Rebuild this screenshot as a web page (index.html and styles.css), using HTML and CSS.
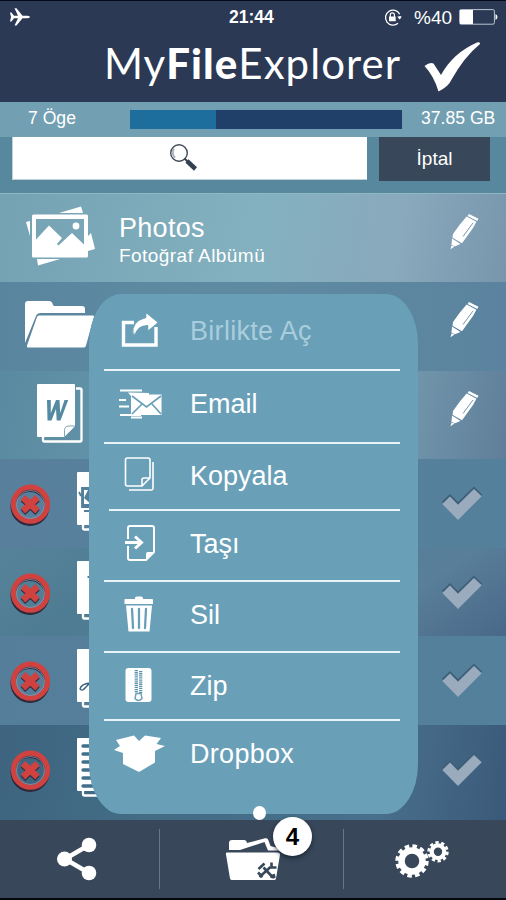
FILE: index.html
```html
<!DOCTYPE html>
<html lang="tr">
<head>
<meta charset="utf-8">
<title>MyFileExplorer</title>
<link rel="stylesheet" href="styles.css">
</head>
<body>
<svg class="defs" width="0" height="0">
  <symbol id="pencil" viewBox="0 0 30 36">
    <path d="M19 0 28.500 4.800 27.200 7 17.600 2Z"/>
    <path d="M16.600 2.600 26.400 7.800 23 14 12 29.200 2.500 23.700 3 20 9.500 11Z"/>
    <path d="M2 24.600 10.500 30 5 32.200 1.500 30.900Z"/>
    <path d="M1.500 31.500 4.500 32.600.5 35.300Z"/>
    <path d="M23 9 13 22.500" fill="none" stroke="#7895ab" stroke-width="1"/>
  </symbol>
  <symbol id="remove" viewBox="0 0 40 42">
    <circle cx="20" cy="22.500" r="17" fill="none" stroke="#2d293c" stroke-width="5"/>
    <circle cx="20.500" cy="20.200" r="17" fill="none" stroke="#cf4240" stroke-width="5.200"/>
    <circle cx="20.500" cy="20.500" r="14" fill="none" stroke="#8c99ac" stroke-width=".8"/>
    <path d="M13 15 27.500 28.500M27.500 15 13 28.500" stroke="#302b3e" stroke-width="6.500"/>
    <path d="M13 13.500 27.500 27M27.500 13.500 13 27" stroke="#cf4240" stroke-width="6.500"/>
  </symbol>
  <symbol id="check" viewBox="0 0 42 36">
    <path d="M1.500 16.500 9 9.500l8 8L33 2l7.500 7.500" fill="none" stroke="#3f5f79" stroke-width="2"/>
    <path d="M1.300 18 9 10.500l8 8.200L33 3l7.700 7.200L17 34Z" fill="#9aabbd"/>
  </symbol>
  <symbol id="page" viewBox="0 0 48 60">
    <path d="M7 54v3q0 1.500 1.500 1.500h35.500q1.500 0 1.500-1.500V7q0-1.500-1.500-1.500h-4" fill="none" stroke="#fff" stroke-width="2.300"/>
    <path d="M2 1h36q1 0 1 1v41L28 54H2q-1 0-1-1V2q0-1 1-1Z"/>
  </symbol>
</svg>
<div class="phone">
  <header class="top">
    <div class="status">
      <svg class="plane" viewBox="0 0 20 18"><path d="M0 4.500h1.500L4 7.800h4L4.500.3h2L12.500 7.800h5Q20 8 20 9t-2.500 1.200h-5L6.500 17.600h-2L8 10.200H4L1.500 13.500H0L1 9Z" fill="#fff"/></svg>
      <span class="clock">21:44</span>
      <svg class="lock" viewBox="0 0 18 17"><path d="M15.700 5.200A7.500 7.500 0 1 0 14 14.200M16 7v2.500" fill="none" stroke="#fff" stroke-width="1.300"/><path d="M13.200 7.500h4.600l-2.300 3ZM5 7.500h6.700v4.700H5Z" fill="#fff"/><path d="M6.300 8V6a2 2 0 0 1 4.100 0v2" fill="none" stroke="#fff" stroke-width="1.200"/></svg>
      <span class="percent">%40</span>
      <svg class="battery" viewBox="0 0 39 16"><rect x=".6" y=".6" width="34.800" height="14.600" rx="1.500" fill="none" stroke="#bec5d0"/><path d="M1 1h13v14H1ZM36.500 5q2 1 2 3t-2 3Z" fill="#fff"/></svg>
    </div>
    <div class="brand">
      <h1>My<b>File</b>Explorer</h1>
      <svg class="tick" viewBox="0 0 57 50"><path d="M.5 24Q6 19.500 9.500 21.500L17 33Q29 11 53 .5 56.500-.5 56 2 40 15 27 38.500 25 44 14.500 49.500 10 34 .5 24Z" fill="#fff"/></svg>
    </div>
  </header>
  <div class="usage"><span class="count">7 Öge</span><div class="meter"><div class="used"></div></div><span class="size">37.85 GB</span></div>
  <div class="tools">
    <div class="search"><svg viewBox="0 0 29 29"><circle cx="10" cy="10" r="8.300" fill="#fff" stroke="#424b5a" stroke-width="1.400"/><path d="M5 5.500q-3 5 1 9.300" fill="none" stroke="#adb2bd" stroke-width="2"/><path d="m15.500 15.500 3 3" stroke="#344052" stroke-width="2"/><path d="m18 18 8.500 8" stroke="#344052" stroke-width="4.500"/></svg></div>
    <button class="cancel">İptal</button>
  </div>
  <main class="list">
    <div class="row r1">
      <svg class="photo" viewBox="0 0 70 60"><path d="M33 7 55 .5 57 7ZM0 16l4-1v15ZM62 30l3-3 4 16-7 2ZM11 53h23L12 59.500Z"/><path fill-rule="evenodd" d="M7.500 8.500h53q1.500 0 1.500 1.500v40q0 1.500-1.500 1.500h-53Q6 51.500 6 50V10q0-1.500 1.500-1.500ZM10 13v20.500L23 19.500l13 12.500-5 6 1.500 1.500L46 27l12 11.500V13Z"/><circle cx="50" cy="20" r="3.400"/></svg>
      <div class="label"><strong>Photos</strong><span>Fotoğraf Albümü</span></div>
      <svg class="pencil"><use href="#pencil"/></svg>
    </div>
    <div class="row r2">
      <svg class="folder" viewBox="0 0 70 48"><path d="M0 43V4Q0 1 3 1h21q3 0 4 4l1 1h28q3 0 3 3v4H16q-4 0-5 3ZM14 15.500h54q1 0 1 1l-8 29q-.5 2-2 2H3q-1.500 0-1-2L12 17q.5-1.500 2-1.500Z"/></svg>
      <svg class="pencil"><use href="#pencil"/></svg>
    </div>
    <div class="row r3">
      <svg class="doc" viewBox="0 0 48 60"><use href="#page"/><path d="M28.500 53.500v-6q0-4.500 4.500-4.500h6" fill="#fff" stroke="#7fa2b6"/><path d="M11 17h3.800v13L20 17h3.500l.7 13L28.500 17h3.700l-7.700 20.500h-3.800L20 26l-4.500 11.500h-4Z" fill="#548ba3"/></svg>
      <svg class="pencil"><use href="#pencil"/></svg>
    </div>
    <div class="row r4">
      <svg class="remove"><use href="#remove"/></svg>
      <svg class="doc" viewBox="0 0 48 60"><use href="#page"/><path d="M6 17h30v19H6ZM3 21l2 4M8 40h20" fill="#527f9b" stroke="#527f9b" stroke-width="1.800"/><path d="M8 19h26v14H8Z"/><path d="m8 27 4-8h8v14h-5Z" fill="#527f9b"/></svg>
      <svg class="check"><use href="#check"/></svg>
    </div>
    <div class="row r5">
      <svg class="remove"><use href="#remove"/></svg>
      <svg class="doc" viewBox="0 0 48 60"><use href="#page"/><path d="M11.500 17h24" stroke="#527f96" stroke-width="2"/></svg>
      <svg class="check"><use href="#check"/></svg>
    </div>
    <div class="row r6">
      <svg class="remove"><use href="#remove"/></svg>
      <svg class="doc" viewBox="0 0 48 60"><use href="#page"/><path d="M14 35Q5 36 4 41q2 3 6-2l5-5" fill="none" stroke="#385e79" stroke-width="1.300"/></svg>
      <svg class="check"><use href="#check"/></svg>
    </div>
    <div class="row r7">
      <svg class="remove"><use href="#remove"/></svg>
      <svg class="doc" viewBox="0 0 48 60"><use href="#page"/><path d="M7 9h28M7 17h28M7 25h28M7 33h28M7 41h28M7 49h20" stroke="#42708b" stroke-width="3.300" stroke-linecap="round"/></svg>
      <svg class="check"><use href="#check"/></svg>
    </div>
  </main>
  <nav class="bottom">
    <div class="tab"><svg class="share" viewBox="0 0 40 44"><path d="M32 8 8 22l24 14" fill="none" stroke="#fff" stroke-width="4.500"/><circle cx="32" cy="8" r="7.300"/><circle cx="7.500" cy="22" r="7.500"/><circle cx="32" cy="36" r="7.300"/></svg></div>
    <div class="tab center">
      <svg class="toolbox" viewBox="0 0 56 44"><path fill-rule="evenodd" d="M4 12V5q0-3 3-3h12q2.500 0 3 3L40 .3q2.500-.6 3.200 1.500L45.500 8l8 2v2.500H43L39.500 4 15 12Z"/><path d="M2 14.500h51q2 0 2 2l-4 24q-.3 1.500-2 1.500H7q-1.500 0-2-1.500L1 16.500q-.5-2 1-2Z"/><g fill="none" stroke="#384759"><path d="m34.500 39 11-10M38.500 29.500 48 39.500" stroke-width="2.600"/><path d="m33.500 31 6-5.500M46.500 24.500v5h5M33 34.500l4.500 4.500M45.500 38.500l4 1M48.500 36l1 4" stroke-width="2.600"/></g></svg>
      <span class="badge">4</span>
    </div>
    <div class="tab"><svg class="gears" viewBox="0 0 54 38"><g fill="none" stroke="#fff"><circle cx="17" cy="21" r="10.500" stroke-width="6.500"/><circle cx="17" cy="21" r="14.800" stroke-width="3.800" stroke-dasharray="4.500 3.249"/><circle cx="43" cy="11.700" r="6.300" stroke-width="4.200"/><circle cx="43" cy="11.700" r="9.300" stroke-width="2.800" stroke-dasharray="3.300 2.543"/></g></svg></div>
  </nav>
  <section class="menu">
    <div class="item m1"><svg viewBox="0 0 52 40"><path d="M22 10.500H11.500V33H44V15" fill="none" stroke="#fff" stroke-width="3.400"/><path d="M21 23q-2-14 13-17V1.500L45 11l-9 7.500v-5q-11-1-15 10Z" stroke="#69a0b8" stroke-width="1"/><path d="M22.500 23q-2-14 12-17V1.500L45.500 10.500 36.500 18v-5Q26 12 22.500 23Z"/></svg><span>Birlikte Aç</span></div>
    <div class="item m2"><svg viewBox="0 0 52 40"><path d="M8 6.500h22M8 31h21M7 16h7M7 22.500h10M19 33.500h11" stroke="#fff" stroke-width="1.900"/><path d="M16 8.500 37 9v1.500h12.500V31H19V12Z"/><path d="m20 12 14.500 11L49 12M20 30l10-10M49 30l-9-10" fill="none" stroke="#69a0b8" stroke-width="1.700"/></svg><span>Email</span></div>
    <div class="item m3"><svg viewBox="0 0 52 40"><path d="M15.500 1H36q2 0 2 2v18l-8 8H15.500q-2 0-2-2V3q0-2 2-2ZM30 29v-6q0-2 2-2h6M17 33h22q2 0 2-2V5" fill="none" stroke="#fff" stroke-width="1.600"/></svg><span>Kopyala</span></div>
    <div class="item m4"><svg viewBox="0 0 52 40"><path d="M16 14V3q0-2 2-2h22q2 0 2 2v24l-8 8H18q-2 0-2-2V21" fill="none" stroke="#fff" stroke-width="2"/><path d="M34 35v-6q0-2 2-2h6Z"/><path d="M13 17.500h16M23 11.500l6.500 6-6.500 6" fill="none" stroke="#fff" stroke-width="3"/></svg><span>Taşı</span></div>
    <div class="item m5"><svg viewBox="0 0 52 40"><path d="M13 4h27q1 0 1 1v4H12.500V5q0-1 .5-1ZM23 3q0-1.500 2-1.500h4q2 0 2 1.500v2h-8ZM14 10.500h26l-2.500 26h-21Z"/><path d="M20 14 21 33M27 14v19M34 14 33 33" stroke="#69a0b8" stroke-width="2.300" stroke-linecap="round"/></svg><span>Sil</span></div>
    <div class="item m6"><svg viewBox="0 0 52 40"><rect x="13.500" y="2" width="26" height="34" rx="3"/><path d="M24.300 4v23M28.700 5v23" stroke="#5b93ad" stroke-width="3.300" stroke-dasharray="1.300 .8"/><path d="M24 27.500h5l1 5q-3.500 4-7 0Z" fill="#fff" stroke="#69a0b8" stroke-width="1.400"/></svg><span>Zip</span></div>
    <div class="item m7"><svg viewBox="0 0 52 40"><path d="M4 6 22 1.500 27 7l6-5.500 16 2.500-4.500 6L53 12l-10 5v11.500L27 38 11 30V19L2 16l6-4Z"/></svg><span>Dropbox</span></div>
    <i class="handle"></i>
  </section>
</div>
</body>
</html>
```
FILE: styles.css
```css
* { box-sizing: border-box; }
body { margin: 0; font-family: "Liberation Sans", Arial, sans-serif; color: #fff; }
svg { display: block; fill: #fff; flex: none; overflow: visible; }
.defs { position: absolute; }
.phone { position: relative; width: 506px; height: 900px; display: flex; flex-direction: column; overflow: hidden; background: #384759; border-top: 1px solid #050a1b; border-bottom: 2px solid #03060b; }
.top { height: 101px; background: #2b3954; }
.status { height: 32px; display: grid; grid-template-columns: 219px 55px 128px 12px 45px 37px; align-items: center; }
.plane { width: 20px; height: 18px; margin-left: 10px; }
.clock { font-size: 17.500px; font-weight: bold; padding: 1px 0 0 10px; white-space: nowrap; }
.lock { width: 18px; height: 17px; justify-self: end; }
.percent { grid-column: 4 / 6; padding: 1px 0 0 12px; font-size: 19px; }
.battery { width: 39px; height: 16px; }
.brand { display: flex; height: 69px; }
h1 { margin: 2px 0 0 104px; width: 320px; font: 400 42px/56px Lato, sans-serif; letter-spacing: 1.050px; white-space: nowrap; }
h1 b { font-weight: 900; }
.tick { width: 57px; height: 50px; margin-top: 9px; }
.usage { height: 35px; background: #72a0b2; display: flex; align-items: center; font-size: 17.600px; }
.count { width: 130px; padding-left: 28px; margin-top: -2px; }
.meter { width: 272px; height: 19px; background: #20406a; }
.used { width: 86px; height: 19px; background: #1d6e9d; }
.size { margin: -2px 0 0 19px; white-space: nowrap; }
.tools { height: 56px; background: #57889d; padding-left: 12px; display: flex; gap: 12px; }
.search { width: 355px; height: 43px; background: #fff; border: solid #bfd0d7; border-width: 0 0 1px 1px; }
.search svg { width: 29px; height: 29px; margin: 6px 0 0 156px; }
.cancel { width: 111px; height: 44px; border: 0; padding: 0 0 1px; background: #384759; color: #fff; font: 19px "Liberation Sans", sans-serif; }
.list { flex: none; height: 627px; }
.row { height: 88.500px; display: flex; position: relative; }
.r1 { height: 89px; background: linear-gradient(100deg, #74a2b3 0, #83b1bf 50%, #89a9bc 78%, #7895ac); border-top: 1px solid #8fb8c4; }
.r2 { background: linear-gradient(90deg, #5a859f, #5f8ba2 45%, #5b839f); }
.r3 { background: linear-gradient(100deg, #598aa1, #6999ad 40%, #7095aa 80%, #607e9a); }
.r4 { background: linear-gradient(90deg, #58809d, #55809b); }
.r5 { background: linear-gradient(145deg, #568399, #4e7c92 25%, #597f9a 75%, #496888); }
.r6 { background: linear-gradient(90deg, #557e9b, #53809a); }
.r7 { height: 95.500px; background: linear-gradient(100deg, #3e6480, #426d85 30%, #486f8b 75%, #3b597a); }
.photo { width: 70px; height: 60px; margin: 12px 0 0 26px; }
.label { margin: 20px 0 0 23px; display: flex; flex-direction: column; }
.label strong { font-size: 27px; font-weight: 400; line-height: 29px; letter-spacing: .3px; }
.label span { font-size: 19px; line-height: 25px; letter-spacing: .45px; }
.pencil { width: 30px; height: 36px; margin: 20px 26px 0 auto; }
.folder { width: 70px; height: 48px; margin: 18px 0 0 25px; }
.doc { width: 48px; height: 60px; margin: 12px 0 0 36px; }
.remove { width: 40px; height: 42px; margin: 25px 0 0 10px; }
.remove + .doc { margin-left: 26px; }
.check { width: 42px; height: 36px; margin: 27px 23px 0 auto; }
.bottom { height: 78px; display: flex; }
.tab { width: 159px; display: flex; }
.center { width: 185px; position: relative; border: solid #68778b; border-width: 0 1px; border-image: linear-gradient(transparent 12%, #68778b 12%, #68778b 88%, transparent 88%) 1; }
.share { width: 40px; height: 44px; margin: 17px 0 0 57px; }
.toolbox { width: 56px; height: 44px; margin: 18px 0 0 65px; }
.badge { position: absolute; left: 113px; top: -3px; width: 39px; height: 39px; border-radius: 50%; background: #fff; color: #000; font: bold 24px/40px "Liberation Sans", sans-serif; text-align: center; box-shadow: 0 2px 4px #0b1520aa; }
.gears { width: 54px; height: 38px; margin: 20px 0 0 51px; }
.menu { position: absolute; left: 89px; top: 293px; width: 329px; height: 520px; background: #69a0b8; border-radius: 32px / 50px; }
.item { margin: 0 18px 0 15px; display: flex; align-items: center; border-bottom: 2px solid #e9f4f8; font-size: 27px; }
.item svg { width: 52px; height: 40px; margin-left: 8px; }
.item span { margin-left: 26px; white-space: nowrap; }
.m1 { height: 77px; } .m1 span { color: #a9cddd; letter-spacing: .3px; }
.m2 { height: 73px; padding-bottom: 5px; }
.m3 { height: 67px; margin-left: 20px; }
.m3 svg { margin-left: 3px; }
.m4 { height: 71px; padding-bottom: 2px; }
.m5 { height: 71px; padding-bottom: 3px; }
.m6 { height: 68px; }
.m7 { height: 66px; border: 0; }
.m7 span { letter-spacing: .3px; }
.handle { position: absolute; left: 164px; bottom: -6px; width: 13px; height: 14px; border-radius: 50%; background: #fff; }
```
